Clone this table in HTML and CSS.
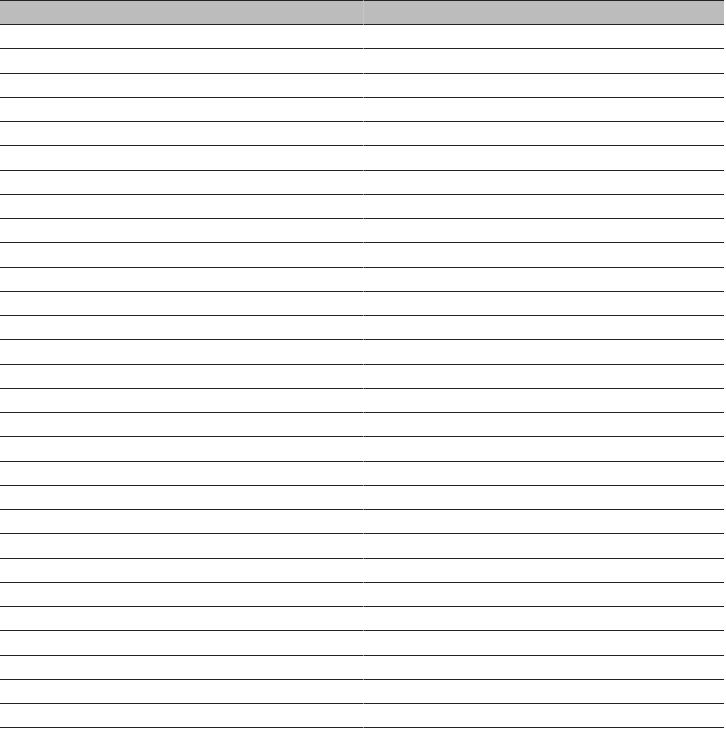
FILE: index.html
```html
<!DOCTYPE html>
<html>
<head>
<meta charset="utf-8">
<link rel="stylesheet" href="styles.css">
</head>
<body>
<div class="table">
  <div class="row head"><div class="cell"></div><div class="cell"></div></div>
  <div class="row"><div class="cell"></div><div class="cell"></div></div>
  <div class="row"><div class="cell"></div><div class="cell"></div></div>
  <div class="row"><div class="cell"></div><div class="cell"></div></div>
  <div class="row"><div class="cell"></div><div class="cell"></div></div>
  <div class="row"><div class="cell"></div><div class="cell"></div></div>
  <div class="row"><div class="cell"></div><div class="cell"></div></div>
  <div class="row"><div class="cell"></div><div class="cell"></div></div>
  <div class="row"><div class="cell"></div><div class="cell"></div></div>
  <div class="row"><div class="cell"></div><div class="cell"></div></div>
  <div class="row"><div class="cell"></div><div class="cell"></div></div>
  <div class="row"><div class="cell"></div><div class="cell"></div></div>
  <div class="row"><div class="cell"></div><div class="cell"></div></div>
  <div class="row"><div class="cell"></div><div class="cell"></div></div>
  <div class="row"><div class="cell"></div><div class="cell"></div></div>
  <div class="row"><div class="cell"></div><div class="cell"></div></div>
  <div class="row"><div class="cell"></div><div class="cell"></div></div>
  <div class="row"><div class="cell"></div><div class="cell"></div></div>
  <div class="row"><div class="cell"></div><div class="cell"></div></div>
  <div class="row"><div class="cell"></div><div class="cell"></div></div>
  <div class="row"><div class="cell"></div><div class="cell"></div></div>
  <div class="row"><div class="cell"></div><div class="cell"></div></div>
  <div class="row"><div class="cell"></div><div class="cell"></div></div>
  <div class="row"><div class="cell"></div><div class="cell"></div></div>
  <div class="row"><div class="cell"></div><div class="cell"></div></div>
  <div class="row"><div class="cell"></div><div class="cell"></div></div>
  <div class="row"><div class="cell"></div><div class="cell"></div></div>
  <div class="row"><div class="cell"></div><div class="cell"></div></div>
  <div class="row"><div class="cell"></div><div class="cell"></div></div>
  <div class="row"><div class="cell"></div><div class="cell"></div></div>
</div>
</body>
</html>
```
FILE: styles.css
```css
html, body {
  margin: 0;
  padding: 0;
  background: #ffffff;
  font-family: "Liberation Sans", Arial, sans-serif;
}
.table {
  width: 724px;
  display: flex;
  flex-direction: column;
}
.row {
  display: grid;
  grid-template-columns: 363px 360px;
  column-gap: 1px;
  height: 24.25px;
  background: linear-gradient(to top, #8f8f8f 1px, transparent 1px);
}
.row .cell {
  background: #ffffff;
  border-bottom: 1px solid #222222;
  box-sizing: border-box;
}
.row.head {
  height: 25px;
  background: linear-gradient(to bottom, #8f8f8f 1px, #c6c6c6 1px, #c6c6c6 24px, #8f8f8f 24px);
}
.row.head .cell {
  background: #bcbcbc;
  border-top: 1px solid #222222;
}
```
